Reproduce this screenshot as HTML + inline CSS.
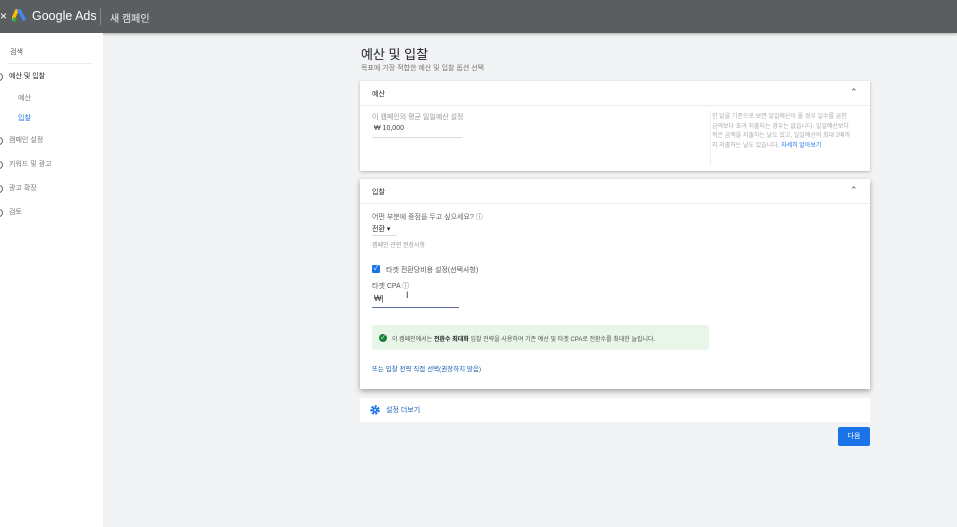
<!DOCTYPE html>
<html><head><meta charset="utf-8"><style>
*{margin:0;padding:0;box-sizing:border-box}
body{width:957px;height:527px;overflow:hidden;background:#f1f3f4;font-family:"Liberation Sans","Noto Sans CJK KR",sans-serif;color:#3c4043;position:relative}
.a{position:absolute;white-space:nowrap}
.hdr{position:absolute;left:0;top:0;width:957px;height:33px;background:#5b5e61;box-shadow:0 1px 3px rgba(0,0,0,.3)}
.side{position:absolute;left:0;top:33px;width:103px;height:494px;background:#fff}
.card{position:absolute;left:360px;width:510px;background:#fff;box-shadow:0 1px 3px rgba(0,0,0,.25)}
.s{font-size:7px;color:#777}
.c{position:absolute;left:-5px;width:8px;height:8px;border:1px solid #666;border-radius:50%}
</style></head><body>
<div class="hdr">
<div class="a" style="left:0;top:9px;color:#fff;font-size:12px">×</div>
<svg class="a" style="left:12px;top:9px" width="14" height="13" viewBox="0 0 14 13"><path d="M5 1 L1 10" stroke="#fbbc04" stroke-width="3.5" stroke-linecap="round"/><path d="M7 1 L12 10" stroke="#4285f4" stroke-width="3.5" stroke-linecap="round"/><circle cx="2.5" cy="10.5" r="2" fill="#34a853"/></svg>
<div class="a" style="left:32px;top:9px;color:#fff;font-size:12.5px">Google Ads</div>
<div class="a" style="left:100px;top:8px;width:1px;height:17px;background:#888"></div>
<div class="a" style="left:110px;top:10px;color:#eee;font-size:10px">새 캠페인</div>
</div>
<div class="side">
<div class="a s" style="left:10px;top:14px;color:#555">검색</div>
<div class="a" style="left:8px;top:30px;width:85px;height:1px;background:#eee"></div>
<div class="c" style="top:40px"></div><div class="a" style="left:9px;top:38px;font-size:7px;color:#222">예산 및 입찰</div>
<div class="a s" style="left:18px;top:60px">예산</div>
<div class="a s" style="left:18px;top:80px;color:#1a73e8">입찰</div>
<div class="c" style="top:104px"></div><div class="a s" style="left:9px;top:102px">캠페인 설정</div>
<div class="c" style="top:128px"></div><div class="a s" style="left:9px;top:126px">키워드 및 광고</div>
<div class="c" style="top:152px"></div><div class="a s" style="left:9px;top:150px">광고 확장</div>
<div class="c" style="top:176px"></div><div class="a s" style="left:9px;top:174px">검토</div>
</div>
<div class="a" style="left:361px;top:44px;font-size:13px;color:#202124">예산 및 입찰</div>
<div class="a s" style="left:361px;top:63px">목표에 가장 적합한 예산 및 입찰 옵션 선택</div>
<div class="card" style="top:81px;height:90px">
<div class="a" style="left:12px;top:8px;font-size:7px;color:#222">예산</div>
<div class="a" style="left:490px;top:6px;font-size:9px;color:#555">⌃</div>
<div class="a" style="left:0;top:24px;width:510px;height:1px;background:#eee"></div>
<div class="a s" style="left:12px;top:31px;color:#999">이 캠페인의 평균 일일예산 설정</div>
<div class="a s" style="left:14px;top:44px;color:#444">₩ 10,000</div>
<div class="a" style="left:12px;top:56px;width:90px;height:1px;background:#ddd"></div>
<div class="a" style="left:350px;top:30px;width:1px;height:55px;background:#eee"></div>
<div class="a s" style="left:352px;top:32px;font-size:6px;color:#aaa;line-height:9.5px;white-space:normal;width:140px">한 달을 기준으로 보면 일일예산이 올 경우 일수를 곱한 금액보다 초과 지출되는 경우는 없습니다. 일일예산보다 적은 금액을 지출하는 날도 있고, 일일예산의 최대 2배까지 지출하는 날도 있습니다. <span style="color:#1a73e8">자세히 알아보기</span></div>
</div>
<div class="card" style="top:179px;height:210px;box-shadow:0 2px 5px rgba(0,0,0,.35)">
<div class="a" style="left:12px;top:8px;font-size:7px;color:#222">입찰</div>
<div class="a" style="left:490px;top:6px;font-size:9px;color:#555">⌃</div>
<div class="a" style="left:0;top:24px;width:510px;height:1px;background:#eee"></div>
<div class="a s" style="left:12px;top:33px;color:#666">어떤 부분에 중점을 두고 싶으세요? ⓘ</div>
<div class="a" style="left:12px;top:45px;font-size:7px;color:#222">전환 ▾</div>
<div class="a" style="left:12px;top:56px;width:25px;height:1px;background:#ddd"></div>
<div class="a" style="left:12px;top:61px;font-size:6px;color:#999">캠페인 관련 권장사항</div>
<div class="a" style="left:12px;top:86px;width:8px;height:8px;background:#1a73e8;border-radius:1px;color:#fff;font-size:7px;line-height:8px;text-align:center">✓</div>
<div class="a s" style="left:26px;top:86px;color:#555">타겟 전환당비용 설정(선택사항)</div>
<div class="a s" style="left:12px;top:102px;color:#555">타겟 CPA ⓘ</div>
<div class="a" style="left:14px;top:115px;font-size:8px;color:#333">₩|</div>
<div class="a" style="left:46px;top:111px;font-size:9px;color:#333">I</div>
<div class="a" style="left:12px;top:128px;width:87px;height:1px;background:#5f6aa8"></div>
<div class="a" style="left:12px;top:146px;width:337px;height:25px;background:#e8f5e9;border-radius:3px"></div>
<div class="a" style="left:19px;top:155px;width:8px;height:8px;border-radius:50%;background:#188038;color:#fff;font-size:6px;line-height:8px;text-align:center">✓</div>
<div class="a" style="left:32px;top:155px;font-size:6px;color:#555">이 캠페인에서는 <b style="color:#222">전환수 최대화</b> 입찰 전략을 사용하여 기존 예산 및 타겟 CPA로 전환수를 최대한 늘립니다.</div>
<div class="a" style="left:12px;top:184px;font-size:6.5px;color:#1a5fb4">또는 입찰 전략 직접 선택(권장하지 않음)</div>
</div>
<div class="card" style="top:398px;height:24px;box-shadow:none">
<svg class="a" style="left:10px;top:7px" width="10" height="10" viewBox="0 0 10 10"><circle cx="5" cy="5" r="3.5" fill="none" stroke="#1a73e8" stroke-width="2.5" stroke-dasharray="2 1.2"/><circle cx="5" cy="5" r="2.5" fill="#1a73e8"/><circle cx="5" cy="5" r="1" fill="#fff"/></svg>
<div class="a" style="left:26px;top:7px;font-size:7px;color:#1a5fb4">설정 더보기</div>
</div>
<div class="a" style="left:838px;top:427px;width:32px;height:19px;background:#1a73e8;border-radius:2px;color:#fff;font-size:7px;text-align:center;line-height:19px">다음</div>
</body></html>
